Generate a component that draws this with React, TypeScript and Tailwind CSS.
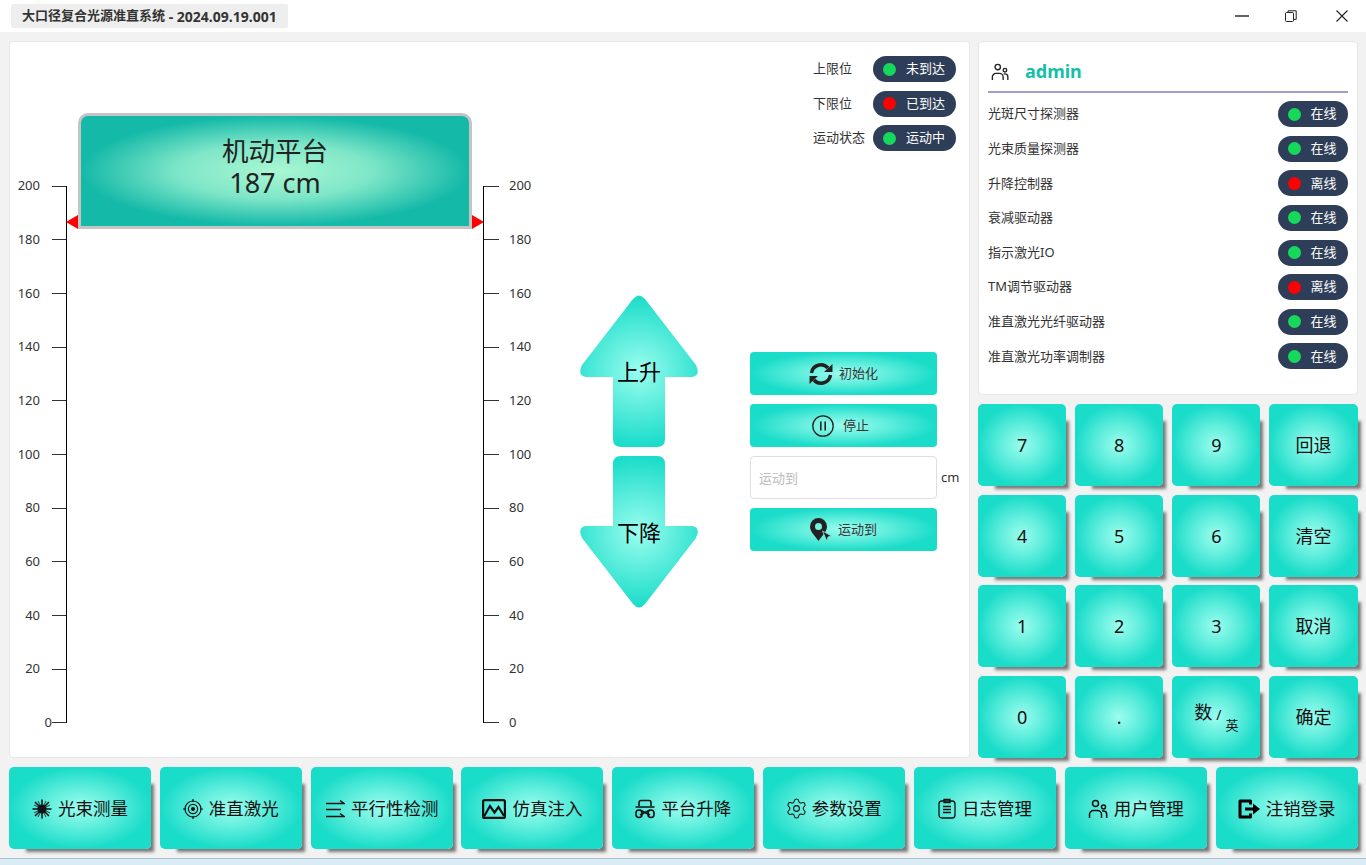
import { ReactNode } from "react";
import { Settings } from "lucide-react";

const FONT = "font-['Noto_Sans','Noto_Sans_CJK_SC',sans-serif]";
const GLOSS = "bg-[radial-gradient(ellipse_closest-side_at_center,#9bfdef_0%,#5eeddc_50%,#19dcc9_100%)]";
const TILE = `rounded-[5px] ${GLOSS} shadow-[10px_10px_3px_-7px_rgba(0,0,0,0.5)] flex items-center justify-center pt-[1px] text-[#111]`;

const TICKS = [200, 180, 160, 140, 120, 100, 80, 60, 40, 20, 0];

const DEVICES = [
  ["光斑尺寸探测器", "在线", true],
  ["光束质量探测器", "在线", true],
  ["升降控制器", "离线", false],
  ["衰减驱动器", "在线", true],
  ["指示激光IO", "在线", true],
  ["TM调节驱动器", "离线", false],
  ["准直激光光纤驱动器", "在线", true],
  ["准直激光功率调制器", "在线", true],
] as const;

const KEYS = ["7", "8", "9", "回退", "4", "5", "6", "清空", "1", "2", "3", "取消", "0", ".", "", "确定"];

function UsersIcon({ className }: { className?: string }) {
  return (
    <svg viewBox="0 0 20 20" className={className} fill="none" stroke="currentColor" strokeWidth="1.5">
      <circle cx="7.5" cy="4.5" r="3" />
      <circle cx="15.5" cy="8" r="2" />
      <path d="M1.5 19v-3.5a4 4 0 0 1 4-4h4a4 4 0 0 1 4 4V19" />
      <path d="M14 12h1.5a3.2 3.2 0 0 1 3.2 3.2V19" />
    </svg>
  );
}

function BeamIcon() {
  return (
    <svg viewBox="0 0 20 20" className="w-[20px] h-[20px]" fill="none" stroke="#111" strokeWidth="1.5">
      <circle cx="10" cy="10" r="4.6" fill="#123" stroke="none" />
      <path d="M10 0.500v19M0.500 10h19M3 3l14 14M17 3L3 17" />
      <path d="M6 2l8 16M14 2L6 18M2 6l16 8M18 6L2 14" strokeWidth="0.8" />
    </svg>
  );
}

function TargetIcon() {
  return (
    <svg viewBox="0 0 20 20" className="w-[20px] h-[20px]" fill="none" stroke="#111" strokeWidth="1.2">
      <circle cx="10" cy="10" r="8" />
      <circle cx="10" cy="10" r="4.6" />
      <circle cx="10" cy="10" r="1.400" fill="#111" />
      <path d="M10 0v3M10 17v3M0 10h3M17 10h3" />
    </svg>
  );
}

function ParallelIcon() {
  return (
    <svg viewBox="0 0 20 20" className="w-[20px] h-[20px]" fill="none" stroke="#111" strokeWidth="1.5">
      <path d="M1 4.500h18L15 1.500M1 10.500h15M1 17.500h18L15 14.500" />
    </svg>
  );
}

function ImageIcon() {
  return (
    <svg viewBox="0 0 24 20" className="w-[24px] h-[20px]" fill="none" stroke="#111" strokeWidth="2.2">
      <rect x="1.100" y="1.100" width="21.800" height="17.800" rx="1.500" />
      <path d="M2 17.500L8 7l4.500 6.500L16.500 8l5.500 9" />
    </svg>
  );
}

function LiftIcon() {
  return (
    <svg viewBox="0 0 20 20" className="w-[20px] h-[20px]" fill="none" stroke="#111" strokeWidth="1.6">
      <path d="M4 7V3.500a2 2 0 0 1 2-2h8a2 2 0 0 1 2 2V7" />
      <path d="M0.500 8h19M5 11l10 5M15 11L5 16" />
      <rect x="1" y="11" width="6" height="7.500" rx="3" />
      <rect x="13" y="11" width="6" height="7.500" rx="3" />
    </svg>
  );
}

function LogIcon() {
  return (
    <svg viewBox="0 0 18 21" className="w-[18px] h-[21px]" fill="none" stroke="#111" strokeWidth="1.3">
      <rect x="1" y="3" width="16" height="17" rx="3" />
      <path d="M6 4.500V1.500h6v3zM5 8.500h8M5 11.500h8M5 14.500h8" />
    </svg>
  );
}

function LogoutIcon() {
  return (
    <svg viewBox="0 0 22 20" className="w-[22px] h-[20px]" fill="none" stroke="#000" strokeWidth="3">
      <path d="M12.500 5.500V2H2v16h10.500v-3.500" strokeLinejoin="round" />
      <path d="M7 10h9" />
      <path d="M15 4.500l7 5.500-7 5.500z" fill="#000" stroke="none" />
    </svg>
  );
}

const NAV: { label: string; icon: ReactNode }[] = [
  { label: "光束测量", icon: <BeamIcon /> },
  { label: "准直激光", icon: <TargetIcon /> },
  { label: "平行性检测", icon: <ParallelIcon /> },
  { label: "仿真注入", icon: <ImageIcon /> },
  { label: "平台升降", icon: <LiftIcon /> },
  { label: "参数设置", icon: <Settings size={23} strokeWidth={1.1} color="#111" className="mr-[-2px] ml-[-2px]" /> },
  { label: "日志管理", icon: <LogIcon /> },
  { label: "用户管理", icon: <UsersIcon className="w-[20px] h-[20px]" /> },
  { label: "注销登录", icon: <LogoutIcon /> },
];

function StatusPill({ ok, text, wide }: { ok: boolean; text: string; wide?: boolean }) {
  return (
    <div
      className={`h-[26px] rounded-[13px] bg-[#2e3e58] flex items-center pl-[10px] text-[13px] text-white ${
        wide ? "w-[83px]" : "w-[70px]"
      }`}
    >
      <span className={`w-[13px] h-[13px] rounded-full ${ok ? "bg-[#16d95b]" : "bg-[#ff0000]"}`} />
      <span className="ml-[10px]">{text}</span>
    </div>
  );
}

function Ruler({ side }: { side: "left" | "right" }) {
  const isLeft = side === "left";
  return (
    <div className={`w-[60px] h-[537px] flex flex-col justify-between ${isLeft ? "border-r border-black" : "border-l border-black"}`}>
      {TICKS.map((t) => (
        <div key={t} className={`h-0 flex items-center ${isLeft ? "justify-end" : "justify-start"}`}>
          {!isLeft && <span className="w-[15px] h-px bg-[#333]" />}
          <span className={`text-[13px] text-[#333] ${isLeft ? (t === 0 ? "mr-0" : "mr-[12px]") : "ml-[10px]"}`}>{t}</span>
          {isLeft && <span className="w-[14px] h-px bg-[#333]" />}
        </div>
      ))}
    </div>
  );
}

function Arrow({ up, label }: { up: boolean; label: string }) {
  const id = up ? "arrowUp" : "arrowDown";
  return (
    <div className="relative w-[118px] h-[152px]">
      <svg viewBox="0 0 118 152" className="w-full h-full">
        <defs>
          <radialGradient id={id} gradientUnits="userSpaceOnUse" cx="59" cy="76" r="76">
            <stop offset="0" stopColor="#9bfdef" />
            <stop offset="1" stopColor="#19dcc9" />
          </radialGradient>
        </defs>
        <path
          transform={up ? undefined : "matrix(1 0 0 -1 0 152)"}
          fill={`url(#${id})`}
          d="M53 4 Q59 -3 65 4 L116 70 Q121 81 112 82 L85 82 L85 144 Q85 152 77 152 L41 152 Q33 152 33 144 L33 82 L6 82 Q-3 81 2 70 Z"
        />
      </svg>
      <span className="absolute left-0 right-0 top-[61px] text-center text-[22px] leading-[30px] text-black">
        {label}
      </span>
    </div>
  );
}

function ActionButton({ icon, label, className }: { icon: ReactNode; label: string; className: string }) {
  return (
    <button className={`w-[187px] h-[43px] rounded-[4px] ${GLOSS} flex items-center justify-center text-[13px] text-[#333] ${className}`}>
      {icon}
      <span>{label}</span>
    </button>
  );
}

export default function App() {
  return (
    <div className={`${FONT} w-[1366px] h-[865px] overflow-hidden bg-[#f2f2f2] flex flex-col`}>
      {/* Title bar */}
      <div className="h-[32px] shrink-0 bg-white flex items-center justify-between pl-[11px]">
        <div className="h-[24px] w-[277px] rounded-[2px] bg-[#eeeeee] flex items-center pl-[11px] text-[13px] font-bold text-[#333] whitespace-pre">
          大口径复合光源准直系统<span className="text-[14px]"> - 2024.09.19.001</span>
        </div>
        <div className="flex items-center text-[#222]">
          <div className="w-[48px] flex justify-center">
            <svg viewBox="0 0 14 2" className="w-[14px] h-[2px]" stroke="currentColor" strokeWidth="1.4">
              <path d="M0 1h14" />
            </svg>
          </div>
          <div className="w-[50px] flex justify-center">
            <svg viewBox="0 0 12 12" className="w-[12px] h-[12px]" fill="none" stroke="currentColor">
              <rect x="0.500" y="2.500" width="8" height="9" rx="1" />
              <path d="M3 2.500V0.800h8.200v8.600H8.500" />
            </svg>
          </div>
          <div className="w-[50px] flex justify-center pl-[1px]">
            <svg viewBox="0 0 12 12" className="w-[12px] h-[12px]" stroke="currentColor" strokeWidth="1.1">
              <path d="M0.500 0.500l11 11M11.500 0.500l-11 11" />
            </svg>
          </div>
        </div>
      </div>

      {/* Main */}
      <div className="h-[726px] shrink-0 flex gap-[8px] pl-[9px] pt-[9px]">
        {/* Platform panel */}
        <div className="relative w-[961px] h-[717px] rounded-[4px] bg-white border border-[#e8e8e8]">
          {/* Limit status */}
          <div className="absolute right-[13px] top-[14px] flex flex-col gap-[8.600px] text-[13px] text-[#333]">
            {[
              ["上限位", "未到达", true],
              ["下限位", "已到达", false],
              ["运动状态", "运动中", true],
            ].map(([name, text, ok]) => (
              <div key={name as string} className="flex items-center">
                <span className="w-[60px]">{name}</span>
                <StatusPill wide ok={ok as boolean} text={text as string} />
              </div>
            ))}
          </div>

          <div className="flex pt-[144px]">
            <div className="ml-[-3px] shrink-0"><Ruler side="left" /></div>
            <div className="w-[416px] shrink-0" />
            <Ruler side="right" />

            <div className="ml-[37px] flex flex-col gap-[9px] pt-[109px]">
              <Arrow up label="上升" />
              <Arrow up={false} label="下降" />
            </div>

            <div className="ml-[52px] pt-[166px] flex flex-col gap-[9px]">
              <ActionButton
                className="gap-[6px]"
                label="初始化"
                icon={
                  <svg viewBox="0 0 24 24" className="w-[24px] h-[24px]" fill="none" stroke="#222" strokeWidth="3.500">
                    <path d="M2.500 11a9.500 9.500 0 0 1 16.500-5" />
                    <path d="M21.500 13a9.500 9.500 0 0 1-16.500 5" />
                    <path d="M15 10h8.500V2z" fill="#222" stroke="none" />
                    <path d="M9 14H0.500v8z" fill="#222" stroke="none" />
                  </svg>
                }
              />
              <ActionButton
                className="gap-[9px] pr-[6px]"
                label="停止"
                icon={
                  <svg viewBox="0 0 22 22" className="w-[22px] h-[22px]" fill="none" stroke="#222" strokeWidth="1.300">
                    <circle cx="11" cy="11" r="10.200" />
                    <path d="M8.800 6.500v9M13.200 6.500v9" strokeWidth="1.600" />
                  </svg>
                }
              />
              <div className="relative w-[187px] h-[43px]">
                <input
                  placeholder="运动到"
                  className="w-full h-full rounded-[4px] bg-white border border-[#dedede] pl-[8px] text-[13px] placeholder:text-[#bbbbbb] outline-none"
                />
                <span className="absolute left-[191px] top-[12px] text-[13px] text-[#333]">cm</span>
              </div>
              <ActionButton
                className="gap-[6px]"
                label="运动到"
                icon={
                  <svg viewBox="0 0 22 24" className="w-[22px] h-[24px]" fill="#222">
                    <path fillRule="evenodd" d="M8.500 0a8.500 8.500 0 0 1 8.500 8.500C17 14 11 19 8.500 23 6 19 0 14 0 8.500A8.500 8.500 0 0 1 8.500 0zm0 5a3.500 3.500 0 1 0 0 7 3.500 3.500 0 0 0 0-7z" />
                    <path d="M12.500 13l9 5-3.500 1-1 4.500z" stroke="#7ff0e0" strokeWidth="0.800" />
                  </svg>
                }
              />
            </div>
          </div>

          {/* Platform marker sits on the ruler at its current height */}
          <div className="absolute left-[68px] top-[71px] w-[394px] h-[116px] rounded-t-[10px] border-[3px] border-[#c4c4c4] bg-[radial-gradient(ellipse_closest-side_at_center,#a9f7d2_0%,#7ee6c8_50%,#14b9a8_100%)] flex flex-col items-center justify-center pb-[8px] text-[#222] text-[26.500px] leading-[32px]">
            <span>机动平台</span>
            <span className="text-[27px]">187 cm</span>
          </div>
          <div className="absolute left-[56px] top-[173px] w-0 h-0 border-y-[7px] border-y-transparent border-r-[12px] border-r-[#ff0000]" />
          <div className="absolute left-[462px] top-[173px] w-0 h-0 border-y-[7px] border-y-transparent border-l-[12px] border-l-[#ff0000]" />
        </div>

        {/* Right column */}
        <div className="w-[379.600px] flex flex-col gap-[9px]">
          <div className="h-[354px] rounded-[4px] bg-white border border-[#e8e8e8] px-[9px]">
            <div className="h-[51px] flex items-end pb-[8px] gap-[16px] border-b-2 border-[#a79cc4] pl-[3px]">
              <UsersIcon className="w-[18px] h-[20px] text-[#222] mb-[1px]" />
              <span className="text-[18px] leading-[24px] font-bold text-[#14bfa8]">admin</span>
            </div>
            <div className="pt-[8px] flex flex-col gap-[8.650px]">
              {DEVICES.map(([name, text, ok]) => (
                <div key={name} className="flex items-center justify-between text-[13px] text-[#333]">
                  <span>{name}</span>
                  <StatusPill ok={ok} text={text} />
                </div>
              ))}
            </div>
          </div>

          <div className="grid grid-cols-4 gap-x-[9px] gap-y-[8.700px]">
            {KEYS.map((k, i) => (
              <button key={i} className={`${TILE} h-[82px] text-[18px]`}>
                {k === "" ? (
                  <span className="flex items-end mt-[-6px]">
                    <span className="text-[18px] leading-[22px] mb-[6px]">数</span>
                    <span className="text-[14px] ml-[4px] mb-[4px]">/</span>
                    <span className="text-[13px] ml-[4px] leading-[16px] mb-[-4px]">英</span>
                  </span>
                ) : (
                  k
                )}
              </button>
            ))}
          </div>
        </div>
      </div>

      {/* Bottom nav */}
      <div className="flex justify-between pl-[9px] pr-[8.300px] pt-[9px]">
        {NAV.map((n) => (
          <button key={n.label} className={`${TILE} w-[142px] h-[82px] text-[17.500px] gap-[6px]`}>
            {n.icon}
            <span>{n.label}</span>
          </button>
        ))}
      </div>

      {/* Desktop behind the window */}
      <div className="mt-[9px] flex-1 bg-[#d9ebf5] border-t border-[#a9bfd4]" />
    </div>
  );
}
